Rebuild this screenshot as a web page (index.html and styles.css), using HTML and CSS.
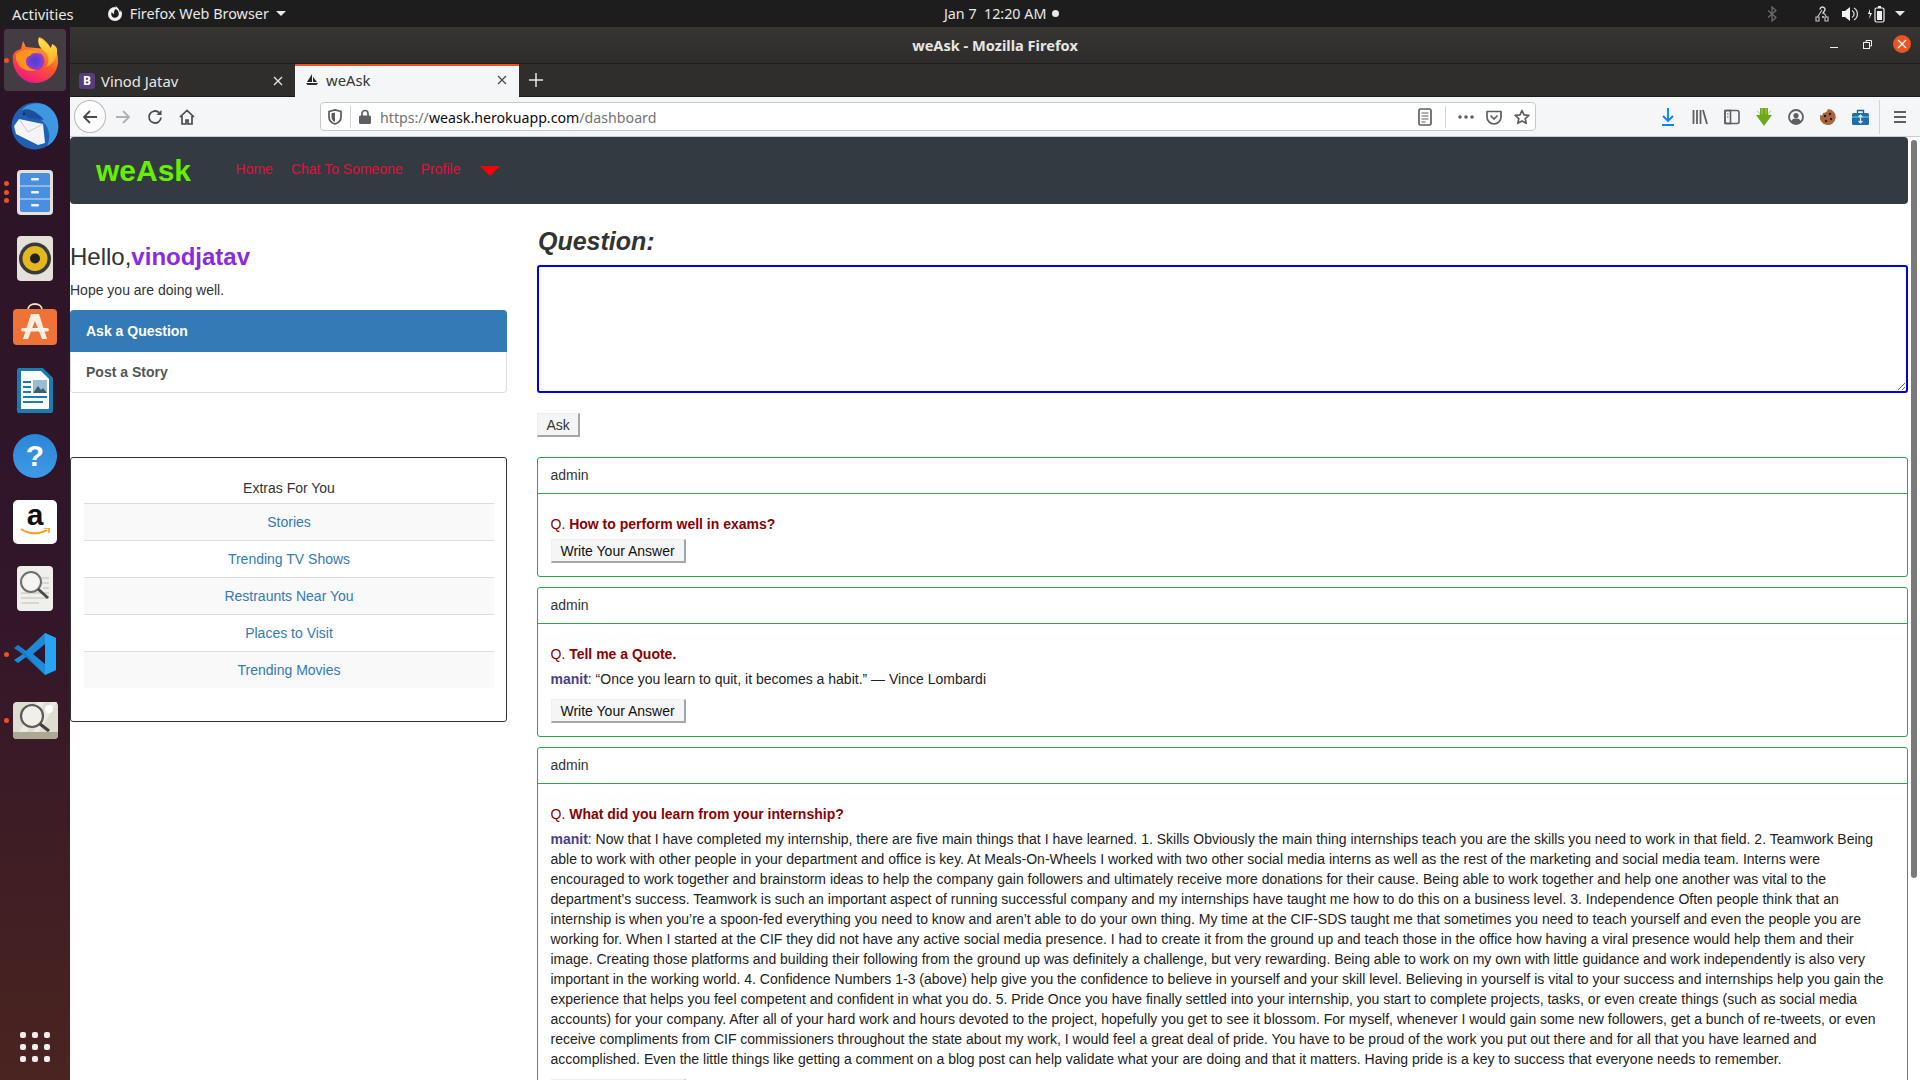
FILE: index.html
```html
<!DOCTYPE html>
<html lang="en">
<head>
    <meta charset="UTF-8">
    <meta name="viewport" content="width=device-width, initial-scale=1.0">
    <title>weAsk</title>
    <link rel="stylesheet" href="styles.css">
</head>
<body>
    <!-- gnome top bar -->
    <header class="topbar">
        <div class="topbar-left">
            <span class="activities">Activities</span>
            <svg class="app-icon" width="16" height="16" viewBox="0 0 16 16"><path d="M8 1a7 7 0 1 0 7 7c0-1.500-.5-3-1.400-4.100.1 1-.2 1.700-.7 2.100C12.500 3.500 10.800 1.600 8.500 0c.4 1.500-.3 2.400-1.200 3.100C9.800 3 11.800 5 11.800 8A3.800 3.800 0 1 1 5 5.700C5 7 5.900 7.900 7.200 7.900c-.6-2 .2-4 1.300-5-.2-.6-.4-1.200-.5-1.900z" fill="#f2f2f2"/></svg>
            <span class="app-name">Firefox Web Browser</span>
            <span class="caret"></span>
        </div>
        <div class="clock">Jan 7&nbsp; 12:20 AM <i class="clock-dot"></i></div>
        <div class="tray">
            <svg class="tray-bt" width="10" height="16" viewBox="0 0 10 16"><path d="M1 4.500l8 7L5 15V1l4 3.500-8 7" fill="none" stroke="#6a6a6a" stroke-width="1.300"/></svg>
            <svg class="tray-net" width="18" height="18" viewBox="0 0 18 18"><path d="M3 16v-4h3v4zM12 16v-4h3v4z" fill="none" stroke="#bdbdbd" stroke-width="1.200"/><path d="M4.500 12L9 5M13.500 12L11 8" stroke="#bdbdbd" stroke-width="1.200"/><path d="M7 4.500a2.500 2.500 0 1 1 4 2c-.8.600-1 1-1 2.500" fill="none" stroke="#e0e0e0" stroke-width="1.400"/><circle cx="10" cy="12" r="1" fill="#e0e0e0"/></svg>
            <svg class="tray-vol" width="18" height="18" viewBox="0 0 18 18"><path d="M1 6h3l5-4v14l-5-4H1z" fill="#f2f2f2"/><path d="M11 5.500a4 4 0 0 1 0 7M13 3a7 7 0 0 1 0 12" fill="none" stroke="#d8d8d8" stroke-width="1.300"/></svg>
            <svg class="tray-bat" width="20" height="18" viewBox="0 0 20 18"><path d="M3 4L1 9h2l-1 5 3-6H3z" fill="#f2f2f2"/><rect x="8" y="3" width="9" height="14" rx="1.500" fill="none" stroke="#f2f2f2" stroke-width="1.200"/><rect x="11" y="1" width="3" height="2" fill="#f2f2f2"/><rect x="10" y="6" width="5" height="9" fill="#f2f2f2"/></svg>
            <span class="caret caret-tray"></span>
        </div>
    </header>

    <div class="desktop">
        <!-- ubuntu dock -->
        <nav class="dock">
            <div class="dock-item dock-active">
                <i class="run-dot"></i>
                <svg width="46" height="46" viewBox="0 0 46 46">
                    <defs>
                        <linearGradient id="ffBody" x1="0.8" y1="0.1" x2="0.35" y2="1"><stop offset="0" stop-color="#ffb92e"/><stop offset="0.5" stop-color="#ff5a2c"/><stop offset="1" stop-color="#ee1583"/></linearGradient>
                        <linearGradient id="ffTop" x1="0.5" y1="0" x2="0.5" y2="1"><stop offset="0" stop-color="#ffe84d"/><stop offset="1" stop-color="#ffa21f"/></linearGradient>
                        <radialGradient id="ffGlobe"><stop offset="0.35" stop-color="#5b3fd4"/><stop offset="1" stop-color="#a63ac4"/></radialGradient>
                    </defs>
                    <path d="M1 18C-1 32 9 46 23 46c13 0 23-10 23-22 0-7-2-13-6-17 0 2-.5 3-1.500 4C36 6 33 3 28 0l6 12-20-2-3-6-2 8C5 13 2 15 1 18z" fill="url(#ffBody)"/>
                    <path d="M27 0c-2 5 0 10 5 14 5 4 6 11 2 16 8-3 12-11 11-18-.5-2-2-4-5-5 0 2-.5 3-1.500 4C36 6 31 4 27 0z" fill="url(#ffTop)"/>
                    <circle cx="23" cy="24" r="9.500" fill="url(#ffGlobe)"/>
                    <path d="M4 17c4-3 9-5 14-4 5 0 9 2 11 4-5-2-10-1-11 2-2 0-4 2-4 6 0 4 5 8 11 8-10 3-19-2-21-11 0-2 0-3 0-5z" fill="#ff9320"/>
                </svg>
            </div>
            <div class="dock-item">
                <svg width="48" height="48" viewBox="0 0 48 48">
                    <circle cx="24" cy="24" r="23.500" fill="#1f5fb4"/>
                    <path d="M10 9C17 0 32-2 41 8c5 5 7 13 6 20-1 7-5 13-11 16 3-6 3-13 0-19C32 17 21 11 10 9z" fill="#3f97e2"/>
                    <path d="M10 9c3-2 7-2 10-1 5 2 10 6 13 10L17 16c-2-3-4-5-7-7z" fill="#1c4f9a"/>
                    <path d="M8 17l24 5 2 19-7 2-22-11-2-8z" fill="#f4f4f6"/>
                    <path d="M8 17l9 13 15-8" fill="none" stroke="#c9ccd4" stroke-width="1"/>
                    <circle cx="13" cy="12" r="1.300" fill="#0f2a54"/>
                </svg>
            </div>
            <div class="dock-item running-3">
                <i class="run-dot"></i><i class="run-dot"></i><i class="run-dot"></i>
                <svg width="36" height="45" viewBox="0 0 36 45">
                    <rect width="36" height="45" rx="4" fill="#e4e1d8"/>
                    <rect x="3" y="3" width="30" height="39" rx="2" fill="#4a8ede"/>
                    <path d="M3 16h30M3 29h30" stroke="#d6e4f6" stroke-width="1"/>
                    <rect x="14" y="8" width="8" height="2.500" rx="1" fill="#eef2f6"/>
                    <rect x="14" y="21" width="8" height="2.500" rx="1" fill="#eef2f6"/>
                    <rect x="14" y="34" width="8" height="2.500" rx="1" fill="#eef2f6"/>
                </svg>
            </div>
            <div class="dock-item">
                <svg width="36" height="45" viewBox="0 0 36 45">
                    <rect width="36" height="45" rx="4" fill="#e4e1d8"/>
                    <circle cx="18" cy="22.500" r="16" fill="#3a3a3a"/>
                    <circle cx="18" cy="22.500" r="12.500" fill="#e2b71f"/>
                    <circle cx="18" cy="22.500" r="5" fill="#222"/>
                </svg>
            </div>
            <div class="dock-item">
                <svg width="44" height="42" viewBox="0 0 44 42">
                    <path d="M15 7c0-8 14-8 14 0" fill="none" stroke="#f3dfc6" stroke-width="1.800"/>
                    <rect y="6" width="44" height="36" rx="4" fill="#ef7338"/>
                    <path d="M18 11h8l8 25h-5l-7-18-7 18h-5z" fill="#fbeee2"/>
                    <rect x="8" y="25" width="28" height="3.500" rx="1.700" fill="#fbeee2"/>
                </svg>
            </div>
            <div class="dock-item">
                <svg width="36" height="45" viewBox="0 0 36 45">
                    <path d="M2 0h24l10 10v33a2 2 0 0 1-2 2H2a2 2 0 0 1-2-2V2a2 2 0 0 1 2-2z" fill="#1a7cb0"/>
                    <path d="M4 3h20l8 8v29a1 1 0 0 1-1 1H4z" fill="#fff"/>
                    <rect x="6" y="13" width="8" height="2" fill="#1a7cb0"/>
                    <rect x="6" y="18" width="8" height="2" fill="#1a7cb0"/>
                    <rect x="6" y="23" width="8" height="2" fill="#1a7cb0"/>
                    <rect x="6" y="28" width="24" height="2" fill="#1a7cb0"/>
                    <rect x="6" y="33" width="20" height="2" fill="#1a7cb0"/>
                    <rect x="16" y="12" width="14" height="13" fill="#9dbcd2"/>
                    <path d="M16 25l5-7 3 4 2-2 4 5z" fill="#3f5d72"/>
                </svg>
            </div>
            <div class="dock-item">
                <svg width="44" height="44" viewBox="0 0 44 44">
                    <defs><linearGradient id="helpBg" x1="0" y1="0" x2="0" y2="1"><stop offset="0" stop-color="#2a86d8"/><stop offset="1" stop-color="#3f9ae6"/></linearGradient></defs>
                    <circle cx="22" cy="22" r="22" fill="url(#helpBg)"/>
                    <text x="22" y="32" class="help-mark">?</text>
                </svg>
            </div>
            <div class="dock-item">
                <div class="amazon-tile">
                    <span class="amazon-a">a</span>
                    <svg class="amazon-smile" width="30" height="9" viewBox="0 0 30 9"><path d="M1 1c7 5 18 6 26 1" fill="none" stroke="#f39a1f" stroke-width="2"/><path d="M24 0h5v5" fill="none" stroke="#f39a1f" stroke-width="1.600"/></svg>
                </div>
            </div>
            <div class="dock-item">
                <svg width="36" height="45" viewBox="0 0 36 45">
                    <rect width="36" height="45" rx="4" fill="#efefec"/>
                    <path d="M20 12h12M24 17h8M26 22h6M4 27h28M4 32h28M4 37h18" stroke="#bdbdb8" stroke-width="1"/>
                    <circle cx="14" cy="16" r="10" fill="#f4f4f2" stroke="#6f6f6f" stroke-width="2"/>
                    <path d="M21 23l10 9" stroke="#4a4a4a" stroke-width="3"/>
                </svg>
            </div>
            <div class="dock-item">
                <i class="run-dot"></i>
                <svg width="42" height="42" viewBox="0 0 42 42">
                    <path d="M31 0l11 5v32l-11 5L12 24l-8 6-4-3 9-6-9-6 4-3 8 6z" fill="#1f8ad6"/>
                    <path d="M31 0l11 5v32l-11 5z" fill="#25a5f2"/>
                    <path d="M31 11L19 21l12 10z" fill="#2a1830"/>
                    <path d="M0 15l4-3 27 30-19-18z" fill="#1272ba" opacity="0.6"/>
                </svg>
            </div>
            <div class="dock-item">
                <i class="run-dot"></i>
                <svg width="45" height="37" viewBox="0 0 45 37">
                    <rect width="45" height="37" rx="4" fill="#dfddd1"/>
                    <path d="M0 30h45v3a4 4 0 0 1-4 4H4a4 4 0 0 1-4-4z" fill="#aba894"/>
                    <path d="M24 0L6 30h8L32 0zM38 0L20 30h6L44 0z" fill="#eeece2"/>
                    <circle cx="36" cy="7" r="4" fill="#fff"/>
                    <circle cx="19" cy="14" r="11" fill="#f0efe8" stroke="#5a5a5a" stroke-width="2.200"/>
                    <path d="M27 22l9 7" stroke="#3f3f3f" stroke-width="3.200"/>
                </svg>
            </div>
            <div class="apps-grid">
                <i></i><i></i><i></i><i></i><i></i><i></i><i></i><i></i><i></i>
            </div>
        </nav>

        <div class="window">
            <div class="titlebar">
                <span class="win-title">weAsk - Mozilla Firefox</span>
                <div class="win-controls">
                    <span class="win-min"></span>
                    <svg class="win-max" width="9" height="9" viewBox="0 0 9 9"><path d="M3 2V.5h5.500V6H7" fill="none" stroke="#eee"/><rect x=".5" y="2.500" width="6" height="6" fill="none" stroke="#eee"/></svg>
                    <span class="win-close">
                        <svg width="10" height="10" viewBox="0 0 10 10"><path d="M1 1l8 8M9 1l-8 8" stroke="#fff" stroke-width="1.400"/></svg>
                    </span>
                </div>
            </div>

            <div class="tabbar">
                <div class="tab">
                    <span class="favicon-b">B</span>
                    <span class="tab-label">Vinod Jatav</span>
                    <svg class="tab-close" width="10" height="10" viewBox="0 0 10 10"><path d="M1 1l8 8M9 1l-8 8" stroke="#e6e6e6" stroke-width="1.300"/></svg>
                </div>
                <div class="tab tab-current">
                    <svg class="favicon-boat" width="12" height="12" viewBox="0 0 12 12"><path d="M6 0v8H1zM7 3l4 5H7zM0 9h12l-1.500 2h-9z" fill="#2b2b2b"/></svg>
                    <span class="tab-label">weAsk</span>
                    <svg class="tab-close" width="10" height="10" viewBox="0 0 10 10"><path d="M1 1l8 8M9 1l-8 8" stroke="#4a4a4a" stroke-width="1.300"/></svg>
                </div>
                <svg class="tab-new" width="14" height="14" viewBox="0 0 14 14"><path d="M7 0v14M0 7h14" stroke="#e6e6e6" stroke-width="1.500"/></svg>
            </div>

            <div class="toolbar">
                <span class="tool tool-back">
                    <svg width="16" height="16" viewBox="0 0 16 16"><path d="M15 8H2M8 2L2 8l6 6" fill="none" stroke="#4a4a4f" stroke-width="1.800"/></svg>
                </span>
                <span class="tool tool-forward">
                    <svg width="16" height="16" viewBox="0 0 16 16"><path d="M1 8h13M8 2l6 6-6 6" fill="none" stroke="#b1b1b3" stroke-width="1.800"/></svg>
                </span>
                <span class="tool">
                    <svg width="16" height="16" viewBox="0 0 16 16"><path d="M14 8.500A6 6 0 1 1 12 3.500" fill="none" stroke="#4a4a4f" stroke-width="1.800"/><path d="M14.500 1v5h-5z" fill="#4a4a4f"/></svg>
                </span>
                <span class="tool">
                    <svg width="16" height="16" viewBox="0 0 16 16"><path d="M1 8l7-6.500L15 8M3 7v8h4v-4h2v4h4V7" fill="none" stroke="#4a4a4f" stroke-width="1.700"/></svg>
                </span>
                <div class="urlbar">
                    <svg class="url-shield" width="14" height="16" viewBox="0 0 14 16"><path d="M1 2.500L7 1l6 1.500V8c0 3.500-3 6-6 7-3-1-6-3.500-6-7z" fill="none" stroke="#5a5a5f" stroke-width="1.700"/><path d="M7 3.500V13c-2-.8-3.500-2.500-3.500-5V4.300z" fill="#5a5a5f"/></svg>
                    <span class="url-sep"></span>
                    <svg class="url-lock" width="12" height="15" viewBox="0 0 12 15"><path d="M3 7V4.500a3 3 0 0 1 6 0V7" fill="none" stroke="#5f5f63" stroke-width="1.700"/><rect y="6.500" width="12" height="8.500" rx="1.500" fill="#5f5f63"/></svg>
                    <span class="url-text"><span class="url-dim">https://</span>weask.herokuapp.com<span class="url-dim">/dashboard</span></span>
                    <svg class="url-reader" width="14" height="18" viewBox="0 0 14 18"><rect x="1" y="1" width="12" height="16" rx="1.500" fill="none" stroke="#5f5f63" stroke-width="1.700"/><path d="M3.500 5h7M3.500 8h7M3.500 11h7M3.500 14h4" stroke="#5f5f63" stroke-width="1.200"/></svg>
                    <span class="url-sep url-sep-end"></span>
                    <svg class="url-more" width="16" height="4" viewBox="0 0 16 4"><circle cx="2" cy="2" r="1.800" fill="#5f5f63"/><circle cx="8" cy="2" r="1.800" fill="#5f5f63"/><circle cx="14" cy="2" r="1.800" fill="#5f5f63"/></svg>
                    <svg class="url-pocket" width="16" height="16" viewBox="0 0 16 16"><path d="M1 2.500h14V8a7 7 0 0 1-14 0z" fill="none" stroke="#5f5f63" stroke-width="1.700" stroke-linejoin="round"/><path d="M4.500 6.500L8 10l3.500-3.500" fill="none" stroke="#5f5f63" stroke-width="1.700"/></svg>
                    <svg class="url-star" width="16" height="16" viewBox="0 0 16 16"><path d="M8 1.500l2 4.400 4.800.5-3.600 3.200 1 4.700L8 11.900l-4.200 2.400 1-4.700L1.200 6.400 6 5.900z" fill="none" stroke="#5f5f63" stroke-width="1.700" stroke-linejoin="round"/></svg>
                </div>
                <div class="toolbar-right">
                    <span class="tool">
                        <svg width="14" height="18" viewBox="0 0 14 18"><path d="M7 0v13M2 8l5 5 5-5" fill="none" stroke="#0a84ff" stroke-width="1.900"/><path d="M1 17h12" stroke="#0a84ff" stroke-width="2"/></svg>
                    </span>
                    <span class="tool">
                        <svg width="16" height="16" viewBox="0 0 16 16"><path d="M1.500 1v14M5 1v14M8.500 1v14M11 1l4 14" stroke="#5f5f63" stroke-width="1.800"/></svg>
                    </span>
                    <span class="tool">
                        <svg width="16" height="16" viewBox="0 0 16 16"><rect x="1" y="1.500" width="14" height="13" rx="2" fill="none" stroke="#5f5f63" stroke-width="1.600"/><rect x="1" y="1.500" width="5.500" height="13" fill="none" stroke="#5f5f63" stroke-width="1.600"/><path d="M3 5h1.500M3 8h1.500" stroke="#5f5f63" stroke-width="1.200"/></svg>
                    </span>
                    <span class="tool">
                        <svg width="16" height="18" viewBox="0 0 16 18"><path d="M4 0h8v7h4l-8 11L0 7h4z" fill="#6fa81c"/><path d="M1 3l3 3M15 3l-3 3M6 0v6M10 0v6" stroke="#a4d34a" stroke-width="1"/></svg>
                    </span>
                    <span class="tool">
                        <svg width="16" height="16" viewBox="0 0 16 16"><circle cx="8" cy="8" r="7" fill="none" stroke="#5f5f63" stroke-width="1.800"/><circle cx="8" cy="6.500" r="2.600" fill="#5f5f63"/><path d="M3 12.500c1-2.500 3-3 5-3s4 .5 5 3l-2 2H5z" fill="#5f5f63"/></svg>
                    </span>
                    <span class="tool">
                        <svg width="16" height="18" viewBox="0 0 16 18"><path d="M9 0a8 8 0 1 1-8 6c2 1 3 0 3-2 2 0 4-1 5-4z" fill="#a8663c" transform="translate(-1 1)"/><circle cx="5" cy="8" r="1.200" fill="#2b1a10"/><circle cx="10" cy="6" r="1.200" fill="#2b1a10"/><circle cx="11" cy="11" r="1.200" fill="#2b1a10"/><circle cx="6" cy="13" r="1.200" fill="#2b1a10"/></svg>
                    </span>
                    <span class="tool">
                        <svg width="17" height="16" viewBox="0 0 17 16"><path d="M5.500 4V1.500h6V4" fill="none" stroke="#1f5f8e" stroke-width="1.400"/><rect y="4" width="17" height="12" rx="1.500" fill="#1f6ea8"/><path d="M0 8h17" stroke="#7fb6dc" stroke-width="1.200"/><path d="M8.500 6v8M6.500 8l2-2 2 2M6.500 12l2 2 2-2" fill="none" stroke="#d8ecf8" stroke-width="1.200"/></svg>
                    </span>
                    <span class="toolbar-sep"></span>
                    <span class="tool tool-menu">
                        <svg width="14" height="14" viewBox="0 0 14 14"><path d="M1 2h12M1 7h12M1 12h12" stroke="#5f5f63" stroke-width="2"/></svg>
                    </span>
                </div>
            </div>

            <div class="viewport">
                <div class="page">
                    <div class="navbar">
                        <a class="brand">weAsk</a>
                        <a class="nav-link">Home</a>
                        <a class="nav-link">Chat To Someone</a>
                        <a class="nav-link">Profile</a>
                        <span class="nav-caret"></span>
                    </div>

                    <div class="content">
                        <aside class="sidebar">
                            <h2 class="hello">Hello,<b>vinodjatav</b></h2>
                            <p class="hope">Hope you are doing well.</p>
                            <ul class="side-menu">
                                <li class="side-item side-active">Ask a Question</li>
                                <li class="side-item">Post a Story</li>
                            </ul>
                            <div class="extras">
                                <div class="extras-title">Extras For You</div>
                                <div class="extras-row"><a>Stories</a></div>
                                <div class="extras-row"><a>Trending TV Shows</a></div>
                                <div class="extras-row"><a>Restraunts Near You</a></div>
                                <div class="extras-row"><a>Places to Visit</a></div>
                                <div class="extras-row"><a>Trending Movies</a></div>
                            </div>
                        </aside>

                        <main class="main">
                            <h2 class="question-head">Question:</h2>
                            <textarea class="question-box"></textarea>
                            <button class="plain-btn ask-btn">Ask</button>

                            <div class="card">
                                <div class="card-head">admin</div>
                                <div class="card-body">
                                    <div class="q-line">Q. <b>How to perform well in exams?</b></div>
                                    <button class="plain-btn">Write Your Answer</button>
                                </div>
                            </div>

                            <div class="card">
                                <div class="card-head">admin</div>
                                <div class="card-body">
                                    <div class="q-line">Q. <b>Tell me a Quote.</b></div>
                                    <p class="answer"><b>manit</b>: “Once you learn to quit, it becomes a habit.” — Vince Lombardi</p>
                                    <button class="plain-btn">Write Your Answer</button>
                                </div>
                            </div>

                            <div class="card">
                                <div class="card-head">admin</div>
                                <div class="card-body">
                                    <div class="q-line">Q. <b>What did you learn from your internship?</b></div>
                                    <p class="answer"><b>manit</b>: Now that I have completed my internship, there are five main things that I have learned. 1. Skills Obviously the main thing internships teach you are the skills you need to work in that field. 2. Teamwork Being able to work with other people in your department and office is key. At Meals-On-Wheels I worked with two other social media interns as well as the rest of the marketing and social media team. Interns were encouraged to work together and brainstorm ideas to help the company gain followers and ultimately receive more donations for their cause. Being able to work together and help one another was vital to the department’s success. Teamwork is such an important aspect of running successful company and my internships have taught me how to do this on a business level. 3. Independence Often people think that an internship is when you’re a spoon-fed everything you need to know and aren’t able to do your own thing. My time at the CIF-SDS taught me that sometimes you need to teach yourself and even the people you are working for. When I started at the CIF they did not have any active social media presence. I had to create it from the ground up and teach those in the office how having a viral presence would help them and their image. Creating those platforms and building their following from the ground up was definitely a challenge, but very rewarding. Being able to work on my own with little guidance and work independently is also very important in the working world. 4. Confidence Numbers 1-3 (above) help give you the confidence to believe in yourself and your skill level. Believing in yourself is vital to your success and internships help you gain the experience that helps you feel competent and confident in what you do. 5. Pride Once you have finally settled into your internship, you start to complete projects, tasks, or even create things (such as social media accounts) for your company. After all of your hard work and hours devoted to the project, hopefully you get to see it blossom. For myself, whenever I would gain some new followers, get a bunch of re-tweets, or even receive compliments from CIF commissioners throughout the state about my work, I would feel a great deal of pride. You have to be proud of the work you put out there and for all that you have learned and accomplished. Even the little things like getting a comment on a blog post can help validate what your are doing and that it matters. Having pride is a key to success that everyone needs to remember.</p>
                                    <button class="plain-btn">Write Your Answer</button>
                                </div>
                            </div>
                        </main>
                    </div>
                </div>
                <div class="scrollbar"><div class="scroll-thumb"></div></div>
            </div>
        </div>
    </div>
</body>
</html>
```

FILE: styles.css
```css
* {
    box-sizing: border-box;
}
html, body {
    margin: 0;
    height: 1080px;
    overflow: hidden;
}
body {
    font-family: "Liberation Sans", Arial, sans-serif;
    font-size: 14px;
    line-height: 20px;
    color: #333;
    background: #2c1425;
}
svg {
    display: block;
    flex: none;
}

/* top bar */
.topbar {
    height: 27px;
    background: #1d1d1d;
    color: #e8e8e8;
    font-family: "Noto Sans", sans-serif;
    font-size: 14.4px;
    display: grid;
    grid-template-columns: 1fr auto 1fr;
    align-items: center;
}
.topbar-left {
    display: flex;
    align-items: center;
    padding-left: 12px;
}
.activities {
    font-size: 14.8px;
    margin-right: 33px;
}
.app-name {
    margin-left: 7px;
}
.caret {
    width: 0;
    height: 0;
    margin-left: 7px;
    border-left: 5px solid transparent;
    border-right: 5px solid transparent;
    border-top: 5px solid #e8e8e8;
}
.clock {
    margin-left: 83px;
    font-size: 14.3px;
    display: flex;
    align-items: center;
    gap: 2px;
    white-space: pre;
}
.clock-dot {
    width: 7px;
    height: 7px;
    border-radius: 50%;
    background: #e8e8e8;
}
.tray {
    display: flex;
    align-items: center;
    justify-content: flex-end;
    padding-right: 15px;
}
.tray-bt {
    margin-right: 36px;
}
.tray-net {
    margin-right: 10px;
}
.tray-vol {
    margin-right: 8px;
}
.caret-tray {
    margin-left: 8px;
}

/* dock */
.desktop {
    display: flex;
    height: 1053px;
}
.dock {
    width: 70px;
    flex: none;
    display: flex;
    flex-direction: column;
    background: linear-gradient(#2a1426, #321629 55%, #4a2420);
}
.dock-item {
    height: 66px;
    flex: none;
    position: relative;
    display: flex;
    align-items: center;
    justify-content: center;
}
.dock-active {
    margin: 2px 4px;
    height: 62px;
    background: #443c43;
    border-radius: 4px;
}
.run-dot {
    position: absolute;
    left: 4px;
    top: 50%;
    width: 5px;
    height: 5px;
    margin-top: -2px;
    border-radius: 50%;
    background: #e95420;
}
.dock-active .run-dot {
    left: 0;
}
.running-3 .run-dot:nth-child(1) {
    margin-top: -11px;
}
.running-3 .run-dot:nth-child(3) {
    margin-top: 6px;
}
.help-mark {
    font-family: "Liberation Sans", sans-serif;
    font-size: 30px;
    font-weight: bold;
    fill: #fff;
    text-anchor: middle;
}
.amazon-tile {
    width: 44px;
    height: 44px;
    background: #fff;
    border-radius: 5px;
    display: flex;
    flex-direction: column;
    align-items: center;
}
.amazon-a {
    font-family: "Liberation Sans", sans-serif;
    font-size: 30px;
    font-weight: bold;
    line-height: 30px;
    color: #111;
}
.amazon-smile {
    margin-top: -2px;
}
.apps-grid {
    margin: auto auto 18px;
    display: grid;
    grid-template-columns: repeat(3, 6px);
    gap: 6px;
}
.apps-grid i {
    height: 6px;
    border-radius: 2px;
    background: #eee;
}

/* firefox chrome */
.window {
    flex: 1;
    min-width: 0;
    display: flex;
    flex-direction: column;
}
.titlebar {
    height: 37px;
    flex: none;
    background: linear-gradient(#383633, #2e2c2b);
    border-bottom: 1px solid #1f1e1d;
    display: flex;
    align-items: center;
    justify-content: center;
    position: relative;
}
.win-title {
    color: #e6e6e6;
    font-family: "Noto Sans", sans-serif;
    font-size: 14.6px;
    font-weight: bold;
}
.win-controls {
    position: absolute;
    right: 9px;
    top: 8px;
    display: flex;
    align-items: center;
}
.win-min {
    width: 8px;
    height: 1px;
    margin-top: 7px;
    background: #eee;
    margin-right: 25px;
}
.win-max {
    margin-right: 21px;
}
.win-close {
    width: 18px;
    height: 18px;
    border-radius: 50%;
    background: #e95420;
    display: flex;
    align-items: center;
    justify-content: center;
}
.tabbar {
    height: 33px;
    flex: none;
    background: #302e2d;
    border-bottom: 1px solid #1b1a19;
    display: flex;
    align-items: stretch;
    font-family: "Noto Sans", sans-serif;
    font-size: 14.8px;
    color: #e6e6e6;
}
.tab {
    width: 225px;
    display: flex;
    align-items: center;
    padding-left: 9px;
    padding-right: 12px;
    padding-top: 1px;
}
.tab-current {
    width: 224px;
    margin-bottom: -1px;
    padding-top: 0;
    padding-bottom: 3px;
    padding-left: 11px;
    background: #f5f6f7;
    border-top: 2px solid #e95420;
    color: #333;
}
.favicon-b {
    width: 16px;
    height: 16px;
    border-radius: 3px;
    background: #563d7c;
    color: #fff;
    font-size: 12px;
    font-weight: bold;
    line-height: 16px;
    text-align: center;
    margin-right: 6px;
}
.favicon-boat {
    margin-right: 8px;
}
.tab-label {
    flex: 1;
}
.tab-new {
    margin: 9px 0 0 10px;
}
.toolbar {
    height: 40px;
    flex: none;
    background: #f5f6f7;
    border-bottom: 1px solid #ccc;
    display: flex;
    align-items: center;
    padding-left: 4px;
}
.tool {
    width: 32px;
    height: 32px;
    flex: none;
    display: flex;
    align-items: center;
    justify-content: center;
}
.tool-back {
    height: 33px;
    background: #fff;
    border: 1px solid #b8b8ba;
    border-radius: 50%;
}
.tool-forward {
    margin-left: 1px;
}
.urlbar {
    width: 1216px;
    height: 29px;
    flex: none;
    margin-left: 117px;
    background: #fff;
    border: 1px solid #c6c7c9;
    border-radius: 4px;
    display: flex;
    align-items: center;
    padding-left: 7px;
    font-family: "Noto Sans", sans-serif;
    color: #0c0c0d;
}
.url-sep {
    width: 1px;
    height: 22px;
    background: #d4d4d6;
    margin: 0 8px;
}
.url-text {
    margin-left: 9px;
    padding-top: 2px;
    flex: 1;
    font-size: 14.2px;
}
.url-dim {
    color: #737373;
}
.url-reader {
    margin-right: 5px;
}
.url-sep-end {
    margin: 0 12px 0 8px;
}
.url-pocket {
    margin: 0 12px;
}
.url-star {
    margin-right: 5px;
}
.toolbar-right {
    display: flex;
    flex: none;
    align-items: center;
    margin-left: 116px;
}
.toolbar-sep {
    width: 1px;
    height: 34px;
    background: #d4d4d6;
    margin-left: 3px;
}
.tool-menu {
    width: 40px;
}

/* page */
.viewport {
    flex: 1;
    min-height: 0;
    display: flex;
    background: #fff;
}
.page {
    flex: 1;
    min-width: 0;
    overflow: hidden;
}
.scrollbar {
    width: 12px;
    flex: none;
    padding: 3px 3px 0 3px;
}
.scroll-thumb {
    width: 6px;
    height: 738px;
    background: #7a7a7a;
    border-radius: 3px;
}
.navbar {
    height: 67px;
    background: #343a42;
    border-radius: 4px;
    display: flex;
    align-items: center;
    padding-left: 26px;
}
.brand {
    font-size: 30px;
    font-weight: bold;
    line-height: 34px;
    color: #66f000;
    margin-right: 44.500px;
}
.nav-link {
    color: #dc143c;
    margin-right: 18px;
    margin-top: -4px;
}
.nav-caret {
    width: 0;
    height: 0;
    margin-left: 2px;
    margin-top: 1px;
    border-left: 10px solid transparent;
    border-right: 10px solid transparent;
    border-top: 10px solid #f00;
}
.content {
    display: grid;
    grid-template-columns: 437px 1fr;
    gap: 30px;
}
.sidebar {
    padding-top: 39px;
}
.hello {
    margin: 0 0 9px;
    font-size: 24px;
    font-weight: normal;
    line-height: 28px;
}
.hello b {
    color: #8a2be2;
}
.hope {
    margin: 0 0 10px;
}
.side-menu {
    list-style-type: none;
    margin: 0;
    padding: 0;
    border: 1px solid #ddd;
    border-top: none;
    border-radius: 4px;
}
.side-item {
    height: 40px;
    padding: 10px 15px;
    font-weight: bold;
    color: #555;
}
.side-active {
    height: 42px;
    margin: 0 -1px;
    padding: 11px 16px;
    background: #337ab7;
    color: #fff;
    border-radius: 4px 4px 0 0;
}
.extras {
    margin-top: 64px;
    height: 265px;
    padding: 20px 12px 0 13px;
    border: 1px solid #333;
    border-radius: 3px;
    text-align: center;
}
.extras-title {
    margin-bottom: 5px;
}
.extras-row {
    height: 37px;
    padding: 8px;
    border-top: 1px solid #ddd;
}
.extras-row:nth-child(even) {
    background: #f9f9f9;
}
.extras-row a {
    color: #337ab7;
}
.main {
    padding-top: 23px;
    min-width: 0;
}
.question-head {
    margin: 0 0 10px 1px;
    font-size: 25px;
    font-style: italic;
    font-weight: bold;
    line-height: 28px;
}
.question-box {
    display: block;
    width: 100%;
    height: 128px;
    border: 2px solid #0000e6;
    border-radius: 3px;
    outline: none;
    background: #fff;
}
.plain-btn {
    display: block;
    height: 24px;
    padding: 0 9px;
    font-family: inherit;
    font-size: 14px;
    line-height: 20px;
    color: #111;
    background: #f4f5f6;
    border: none;
    border-right: 2px solid #a6a6a6;
    border-bottom: 2px solid #a6a6a6;
    border-top: 1px solid #eee;
    border-left: 1px solid #eee;
}
.ask-btn {
    margin-top: 20px;
    padding: 0 8.500px;
    color: #333;
}
.card {
    margin-top: 10px;
    border: 1px solid #28a745;
    border-radius: 3px;
}
.ask-btn + .card {
    margin-top: 20px;
}
.card-head {
    padding: 7px 12.500px 8px;
    border-bottom: 1px solid #28a745;
}
.card-body {
    padding: 20px 12.500px 13px;
}
.q-line {
    margin-bottom: 5px;
    color: #8b0000;
}
.answer {
    margin: 0 0 10px;
    color: #222;
}
.answer b {
    color: #483d8b;
}
```
